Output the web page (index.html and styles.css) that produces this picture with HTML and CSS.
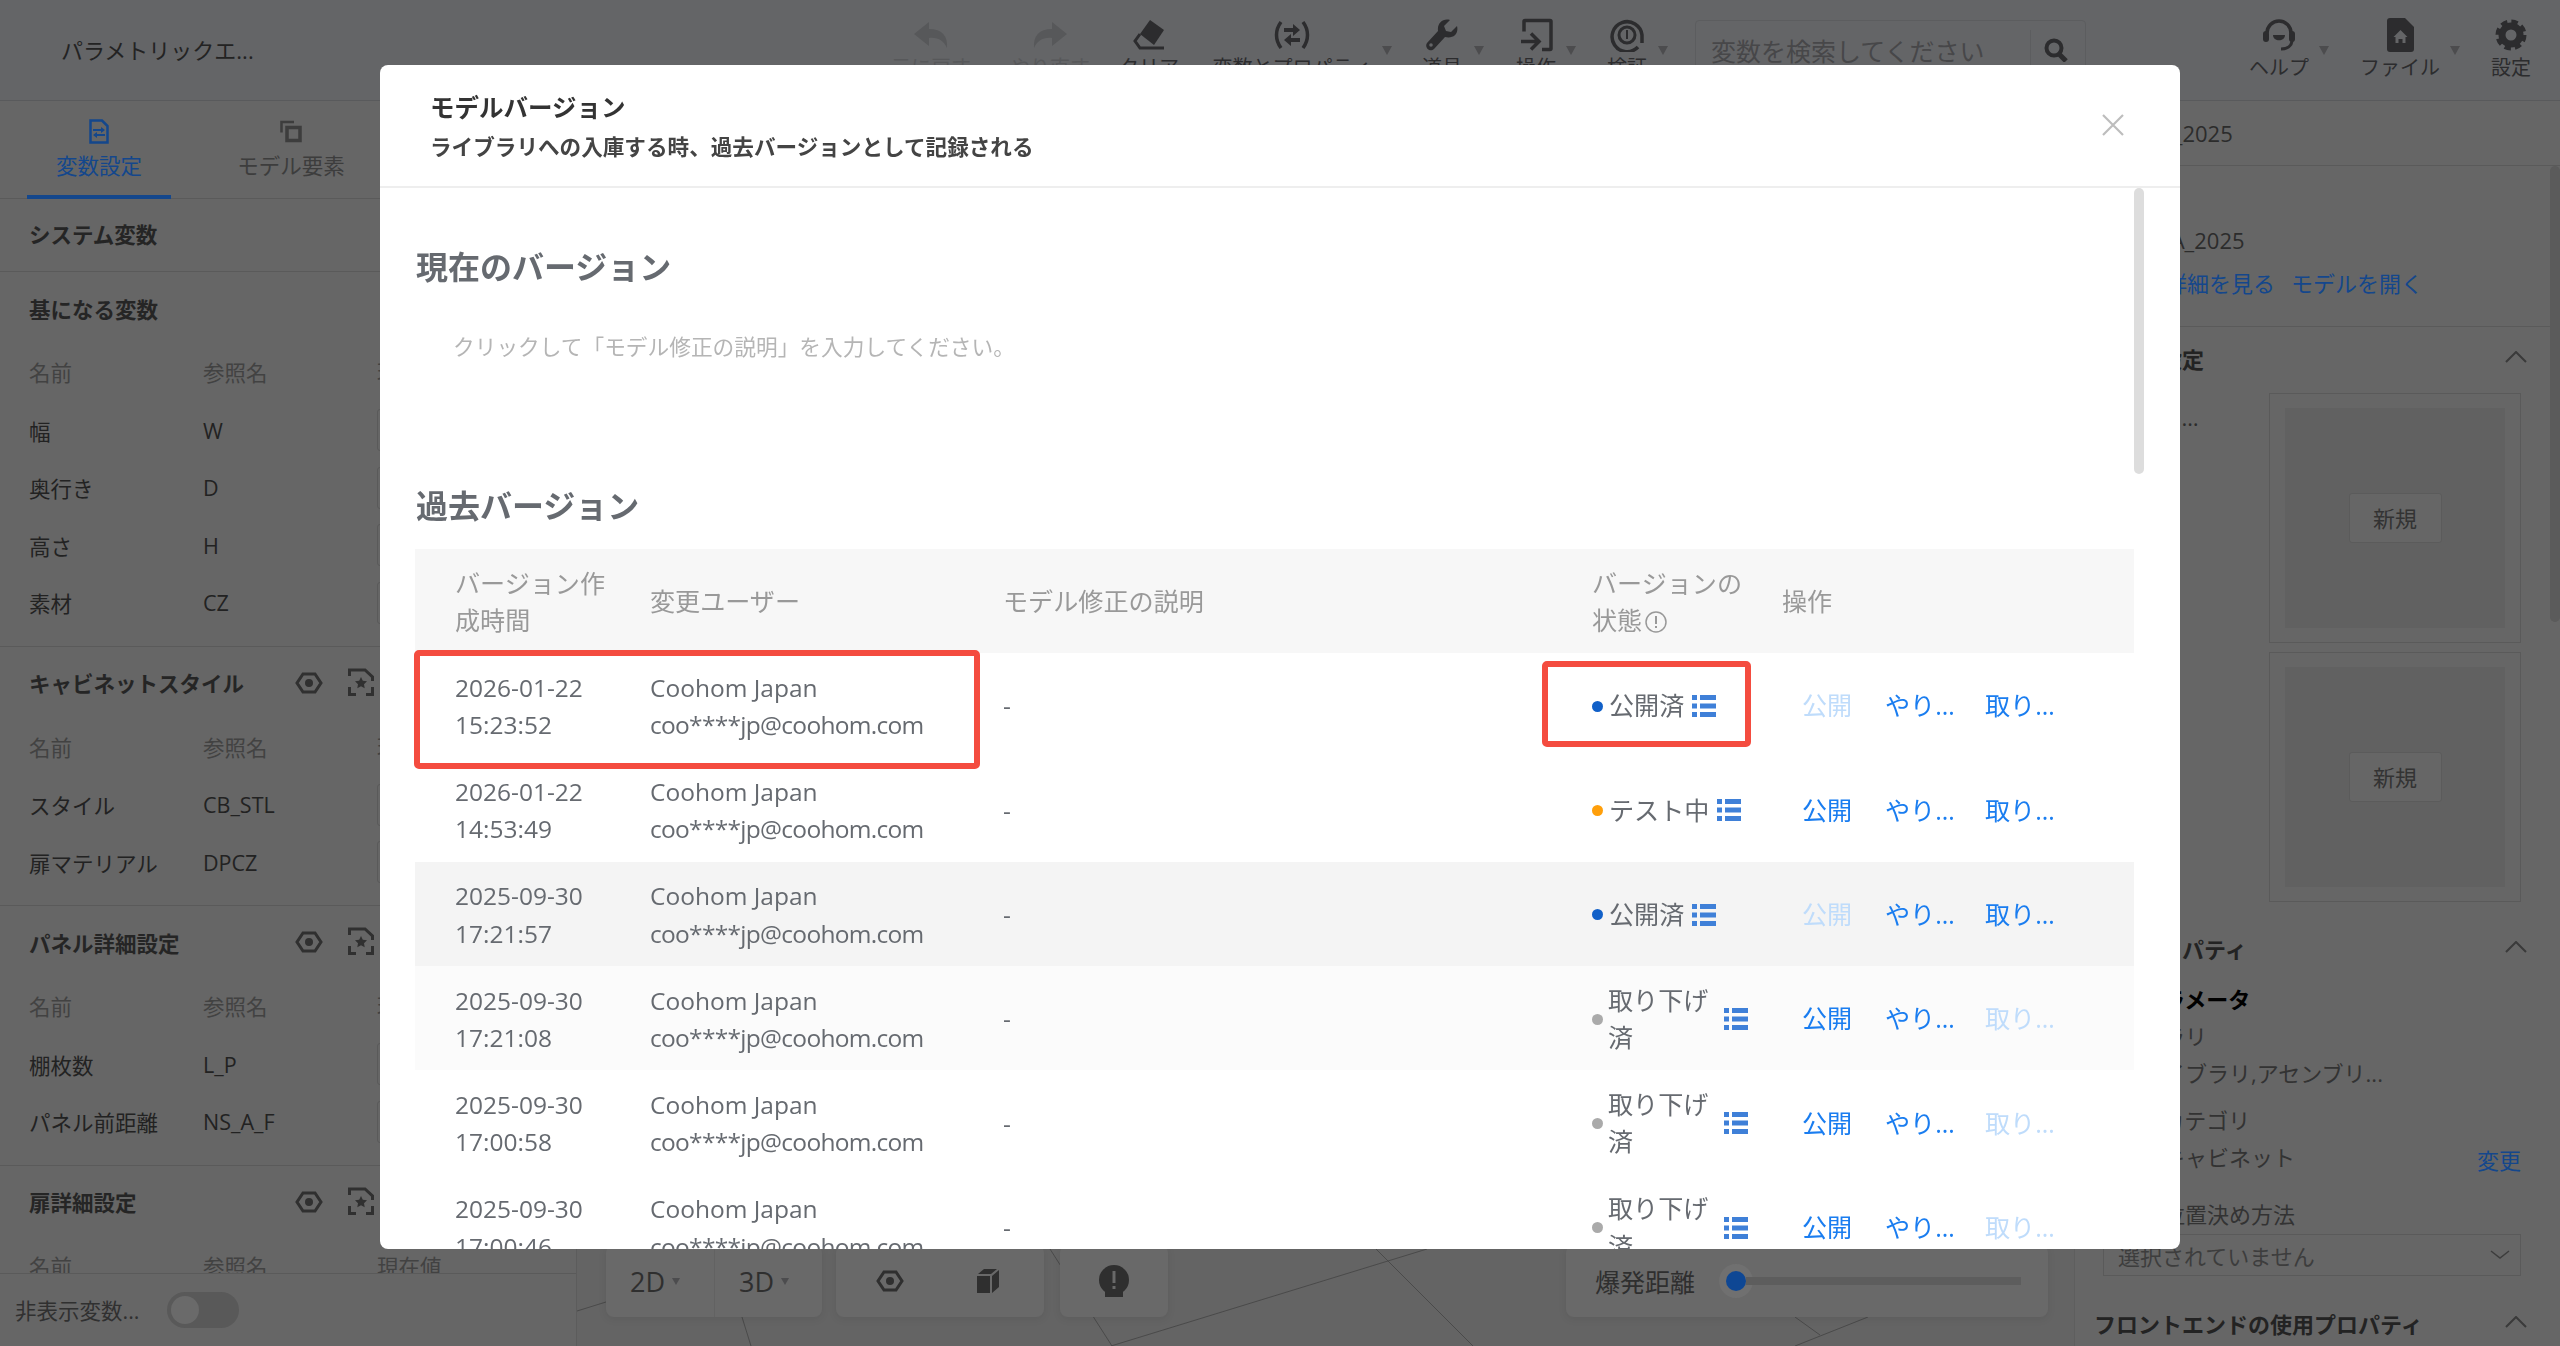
FILE: index.html

```html
<!DOCTYPE html>
<html lang="ja">
<head>
    <meta charset="UTF-8">
    <meta name="viewport" content="width=device-width, initial-scale=1.0">
    <title>モデルバージョン</title>
    <link rel="stylesheet" href="styles.css">
</head>
<body>
    <svg class="defs" width="0" height="0">
        <symbol id="i-list" viewBox="0 0 24 22">
            <path fill="currentColor" d="M0 0h5v5H0zM8 0h16v5H8zM0 8.500h5v5H0zM8 8.500h16v5H8zM0 17h5v5H0zM8 17h16v5H8z"/>
        </symbol>
        <symbol id="i-eye" viewBox="0 0 28 24">
            <path fill="none" stroke="currentColor" stroke-width="3" d="M8 3h12l6 9-6 9H8l-6-9z"/>
            <circle cx="14" cy="12" r="4" fill="currentColor"/>
        </symbol>
        <symbol id="i-star" viewBox="0 0 26 28">
            <path fill="none" stroke="currentColor" stroke-width="3" d="M1.500 8V2H17l7.500 7v4M24.500 19v7.500H18M8 26.500H1.500V19"/>
            <path fill="currentColor" d="M13 9l1.800 3.700 4.200.6-3 2.900.7 4.100-3.700-2-3.700 2 .7-4.100-3-2.900 4.200-.6z"/>
        </symbol>
        <symbol id="i-up" viewBox="0 0 22 12">
            <path fill="none" stroke="currentColor" stroke-width="2" d="M1 11 11 1l10 10"/>
        </symbol>
    </svg>

    <header class="topbar">
        <div class="app-title">パラメトリックエ...</div>
        <div class="tool tool-undo is-off">
            <svg width="34" height="26" viewBox="0 0 34 26"><path fill="currentColor" d="M15 0 0 12l15 12v-8c9-1 15 3 18 10 1-12-5-19-18-19z"/></svg>
            <span>元に戻す</span>
        </div>
        <div class="tool tool-redo is-off">
            <svg width="34" height="26" viewBox="0 0 34 26"><path fill="currentColor" d="M19 0l15 12-15 12v-8c-9-1-15 3-18 10C0 14 6 7 19 7z"/></svg>
            <span>やり直す</span>
        </div>
        <div class="tool tool-clear">
            <svg width="32" height="30" viewBox="0 0 32 30"><path fill="currentColor" d="M17 0l14 10-10 15L7 14z"/><path fill="none" stroke="currentColor" stroke-width="3" d="M7 14l-5 7 5 7h24"/></svg>
            <span>クリア</span>
        </div>
        <div class="tool tool-var">
            <svg width="36" height="28" viewBox="0 0 36 28"><path fill="none" stroke="currentColor" stroke-width="3.500" d="M7 1C1 9 1 19 7 27M29 1c6 8 6 18 0 26"/><path fill="currentColor" d="M10 7h9V3l7 6-7 6v-4h-9zM26 17h-9v-4l-7 6 7 6v-4h9z"/></svg>
            <span>変数とプロパティ</span>
            <i class="caret"></i>
        </div>
        <div class="tool tool-wrench">
            <svg width="32" height="32" viewBox="0 0 32 32"><path fill="currentColor" d="M31 7l-6 6-5-1-2-5 6-6C17-1 11 4 12 12L1 24c-3 4 3 10 7 6l11-12c8 2 14-3 12-11z"/><circle cx="5" cy="26" r="1.800" fill="#646567"/></svg>
            <span>道具</span>
            <i class="caret"></i>
        </div>
        <div class="tool tool-op">
            <svg width="33" height="33" viewBox="0 0 33 33"><path fill="none" stroke="currentColor" stroke-width="3.500" d="M4 13V3a1 1 0 0 1 1-1h25a1 1 0 0 1 1 1v27a1 1 0 0 1-1 1h-8"/><path fill="none" stroke="currentColor" stroke-width="3.500" d="M1 23h17M11 15l8 8-8 8"/></svg>
            <span>操作</span>
            <i class="caret"></i>
        </div>
        <div class="tool tool-check">
            <svg width="34" height="34" viewBox="0 0 34 34"><path fill="none" stroke="currentColor" stroke-width="3.500" d="M28 29A15 15 0 1 1 32 17v8"/><circle cx="17" cy="17" r="8" fill="none" stroke="currentColor" stroke-width="3"/><path fill="currentColor" d="M16 12h2v9h-2z"/></svg>
            <span>検証</span>
            <i class="caret"></i>
        </div>
        <div class="search">
            <span class="search-text">変数を検索してください</span>
            <span class="search-btn">
                <svg width="24" height="24" viewBox="0 0 24 24"><circle cx="10" cy="10" r="7.500" fill="none" stroke="currentColor" stroke-width="4"/><path stroke="currentColor" stroke-width="5" d="M15 16l7 7"/></svg>
            </span>
        </div>
        <div class="tool tool-help">
            <svg width="34" height="34" viewBox="0 0 34 34"><path fill="none" stroke="currentColor" stroke-width="3.500" d="M5 15a12 12 0 0 1 24 0"/><rect x="1" y="13" width="6" height="11" rx="3" fill="currentColor"/><rect x="27" y="13" width="6" height="11" rx="3" fill="currentColor"/><path fill="none" stroke="currentColor" stroke-width="3" d="M30 22c0 6-5 9-11 9"/><path fill="currentColor" d="M11 17h12c0 7-12 7-12 0z"/></svg>
            <span>ヘルプ</span>
            <i class="caret"></i>
        </div>
        <div class="tool tool-file">
            <svg width="27" height="34" viewBox="0 0 27 34"><path fill="currentColor" d="M3 0h15l9 9v22a3 3 0 0 1-3 3H3a3 3 0 0 1-3-3V3a3 3 0 0 1 3-3z"/><path fill="#646567" d="M13.500 12l7 7h-2v6h-3v-4h-4v4h-3v-6h-2z"/></svg>
            <span>ファイル</span>
            <i class="caret"></i>
        </div>
        <div class="tool tool-gear">
            <svg width="32" height="32" viewBox="0 0 32 32"><circle cx="16" cy="16" r="9" fill="none" stroke="currentColor" stroke-width="7"/><circle cx="16" cy="16" r="13.500" fill="none" stroke="currentColor" stroke-width="4" stroke-dasharray="6.500 4.100"/></svg>
            <span>設定</span>
        </div>
    </header>

    <main class="workspace">
        <aside class="left-panel">
            <nav class="tabs">
                <div class="tab is-active">
                    <svg width="20" height="25" viewBox="0 0 20 25"><path fill="none" stroke="currentColor" stroke-width="2.500" d="M1.500 1.500H13L18.500 7v16.500h-17z"/><path fill="currentColor" d="M4 10h8V8l4 3-4 3v-2H4zM16 15H8v-2l-4 3 4 3v-2h8z"/></svg>
                    <span>変数設定</span>
                </div>
                <div class="tab">
                    <svg width="22" height="22" viewBox="0 0 22 22"><path fill="none" stroke="currentColor" stroke-width="2.500" d="M1.500 12V1.500H14"/><path fill="none" stroke="currentColor" stroke-width="3.500" d="M7 7h13v13H7z"/></svg>
                    <span>モデル要素</span>
                </div>
            </nav>
            <div class="panel-scroll">
                <section class="var-group"><h3 class="group-head">システム変数</h3></section>
                <section class="var-group has-rows">
                    <h3 class="group-head">基になる変数</h3>
                    <div class="var-row var-labels"><span>名前</span><span>参照名</span><span>現在値</span></div>
                    <div class="var-row"><span>幅</span><span>W</span><b class="var-input"></b></div>
                    <div class="var-row"><span>奥行き</span><span>D</span><b class="var-input"></b></div>
                    <div class="var-row"><span>高さ</span><span>H</span><b class="var-input"></b></div>
                    <div class="var-row"><span>素材</span><span>CZ</span><b class="var-input"></b></div>
                </section>
                <section class="var-group has-rows">
                    <h3 class="group-head">キャビネットスタイル
                        <svg class="head-eye"><use href="#i-eye"/></svg><svg class="head-star"><use href="#i-star"/></svg>
                    </h3>
                    <div class="var-row var-labels"><span>名前</span><span>参照名</span><span>現在値</span></div>
                    <div class="var-row"><span>スタイル</span><span>CB_STL</span><b class="var-input"></b></div>
                    <div class="var-row"><span>扉マテリアル</span><span>DPCZ</span><b class="var-input"></b></div>
                </section>
                <section class="var-group has-rows">
                    <h3 class="group-head">パネル詳細設定
                        <svg class="head-eye"><use href="#i-eye"/></svg><svg class="head-star"><use href="#i-star"/></svg>
                    </h3>
                    <div class="var-row var-labels"><span>名前</span><span>参照名</span><span>現在値</span></div>
                    <div class="var-row"><span>棚枚数</span><span>L_P</span><b class="var-input"></b></div>
                    <div class="var-row"><span>パネル前距離</span><span>NS_A_F</span><b class="var-input"></b></div>
                </section>
                <section class="var-group has-rows">
                    <h3 class="group-head">扉詳細設定
                        <svg class="head-eye"><use href="#i-eye"/></svg><svg class="head-star"><use href="#i-star"/></svg>
                    </h3>
                    <div class="var-row var-labels"><span>名前</span><span>参照名</span><span>現在値</span></div>
                </section>
            </div>
            <div class="panel-foot">
                <span>非表示変数...</span>
                <span class="toggle"><i></i></span>
            </div>
        </aside>

        <div class="canvas">
            <svg class="scene" width="1497" height="1245" viewBox="577 101 1497 1245">
                <path fill="none" stroke="#4a4a4a" d="M1376 1249l97 97M1427 1249l-316 97M1050 1249l62 97M742 1317l9 29M577 1311l29-9M1795 1317l25 18M1868 1317l-73 29"/>
            </svg>
            <div class="float-bars">
                <div class="float-bar bar-view">
                    <span class="view-btn">2D<i class="caret"></i></span>
                    <span class="view-btn">3D<i class="caret"></i></span>
                </div>
                <div class="float-bar bar-icons">
                    <svg class="bar-eye"><use href="#i-eye"/></svg>
                    <svg width="22" height="24" viewBox="0 0 22 24"><path fill="currentColor" d="M0 7h13v17H0zM15 7l7-6v17l-7 6zM1 5l6-5h13l-6 5z"/></svg>
                </div>
                <div class="float-bar bar-warn">
                    <svg width="30" height="32" viewBox="0 0 30 32"><circle cx="15" cy="15" r="15" fill="currentColor"/><path fill="currentColor" d="M6 24h18v8H6z"/><path fill="#696969" d="M13.500 6h3v12h-3zM13.500 21h3v3h-3z"/></svg>
                </div>
                <div class="float-bar bar-range">
                    <span>爆発距離</span>
                    <span class="range"><i class="range-dot"></i><i class="range-track"></i></span>
                </div>
            </div>
        </div>

        <aside class="right-panel">
            <div class="rp-name">ベースA_2025</div>
            <div class="rp-scroll">
                <i class="rp-thumb"></i>
                <div class="rp-info">
                    <div class="rp-model">ベース.A_2025</div>
                    <div class="rp-links"><a>モデル詳細を見る</a><a>モデルを開く</a></div>
                </div>
                <div class="rp-section">
                    <h3 class="rp-head rp-head-first">外観の設定<svg class="rp-up"><use href="#i-up"/></svg></h3>
                    <div class="rp-styles">
                        <span class="rp-style-label">サムネイルの</span>
                        <div class="rp-boxes">
                            <div class="rp-box"><div class="rp-box-in"><span class="rp-new">新規</span></div></div>
                            <div class="rp-box"><div class="rp-box-in"><span class="rp-new">新規</span></div></div>
                        </div>
                    </div>
                </div>
                <div class="rp-section rp-props">
                    <h3 class="rp-head">基本プロパティ<svg class="rp-up"><use href="#i-up"/></svg></h3>
                    <div class="rp-sub">基本パラメータ</div>
                    <div class="rp-line">ライブラリ</div>
                    <div class="rp-line">個人ライブラリ,アセンブリ...</div>
                    <div class="rp-line rp-gap">モデルカテゴリ</div>
                    <div class="rp-line rp-change">家具・キャビネット<a>変更</a></div>
                    <div class="rp-line rp-gap-lg">自動の位置決め方法</div>
                    <div class="rp-select">選択されていません<svg width="20" height="10" viewBox="0 0 20 10"><path fill="none" stroke="currentColor" stroke-width="1.500" d="M1 1l9 7 9-7"/></svg></div>
                    <h3 class="rp-head rp-head-last">フロントエンドの使用プロパティ<svg class="rp-up"><use href="#i-up"/></svg></h3>
                </div>
            </div>
        </aside>
    </main>

    <div class="mask">
        <div class="modal">
            <div class="modal-head">
                <div class="modal-title">モデルバージョン</div>
                <div class="modal-sub">ライブラリへの入庫する時、過去バージョンとして記録される</div>
                <svg class="modal-close" width="22" height="22" viewBox="0 0 22 22"><path fill="none" stroke="currentColor" stroke-width="2.200" d="M1 1l20 20M21 1L1 21"/></svg>
            </div>
            <div class="modal-body">
                <i class="modal-thumb"></i>
                <h2 class="section-title">現在のバージョン</h2>
                <p class="desc-hint">クリックして「モデル修正の説明」を入力してください。</p>
                <h2 class="section-title section-past">過去バージョン</h2>
                <table class="ver-table">
                    <colgroup><col class="c-time"><col class="c-user"><col class="c-desc"><col class="c-state"><col class="c-ops"></colgroup>
                    <thead>
                        <tr>
                            <th>バージョン作成時間</th>
                            <th>変更ユーザー</th>
                            <th>モデル修正の説明</th>
                            <th>バージョンの状態<svg class="th-info" width="22" height="22" viewBox="0 0 22 22"><circle cx="11" cy="11" r="10" fill="none" stroke="currentColor" stroke-width="1.500"/><path fill="currentColor" d="M10 5h2v8h-2zM10 15h2v2h-2z"/></svg></th>
                            <th>操作</th>
                        </tr>
                    </thead>
                    <tbody>
                        <tr>
                            <td>2026-01-22<br>15:23:52</td>
                            <td>Coohom Japan<br><span class="mail">coo****jp@coohom.com</span></td>
                            <td>-</td>
                            <td><div class="state"><i class="dot dot-pub"></i><span class="state-text">公開済</span><svg class="state-list"><use href="#i-list"/></svg></div></td>
                            <td><div class="ops"><a class="op op-short is-off">公開</a><a class="op">やり直す</a><a class="op">取り下げ</a></div></td>
                        </tr>
                        <tr>
                            <td>2026-01-22<br>14:53:49</td>
                            <td>Coohom Japan<br><span class="mail">coo****jp@coohom.com</span></td>
                            <td>-</td>
                            <td><div class="state"><i class="dot dot-test"></i><span class="state-text">テスト中</span><svg class="state-list"><use href="#i-list"/></svg></div></td>
                            <td><div class="ops"><a class="op op-short">公開</a><a class="op">やり直す</a><a class="op">取り下げ</a></div></td>
                        </tr>
                        <tr class="is-striped">
                            <td>2025-09-30<br>17:21:57</td>
                            <td>Coohom Japan<br><span class="mail">coo****jp@coohom.com</span></td>
                            <td>-</td>
                            <td><div class="state"><i class="dot dot-pub"></i><span class="state-text">公開済</span><svg class="state-list"><use href="#i-list"/></svg></div></td>
                            <td><div class="ops"><a class="op op-short is-off">公開</a><a class="op">やり直す</a><a class="op">取り下げ</a></div></td>
                        </tr>
                        <tr class="is-hover">
                            <td>2025-09-30<br>17:21:08</td>
                            <td>Coohom Japan<br><span class="mail">coo****jp@coohom.com</span></td>
                            <td>-</td>
                            <td><div class="state"><i class="dot dot-off"></i><span class="state-text state-wrap">取り下げ済</span><svg class="state-list"><use href="#i-list"/></svg></div></td>
                            <td><div class="ops"><a class="op op-short">公開</a><a class="op">やり直す</a><a class="op is-off">取り下げ</a></div></td>
                        </tr>
                        <tr>
                            <td>2025-09-30<br>17:00:58</td>
                            <td>Coohom Japan<br><span class="mail">coo****jp@coohom.com</span></td>
                            <td>-</td>
                            <td><div class="state"><i class="dot dot-off"></i><span class="state-text state-wrap">取り下げ済</span><svg class="state-list"><use href="#i-list"/></svg></div></td>
                            <td><div class="ops"><a class="op op-short">公開</a><a class="op">やり直す</a><a class="op is-off">取り下げ</a></div></td>
                        </tr>
                        <tr>
                            <td>2025-09-30<br>17:00:46</td>
                            <td>Coohom Japan<br><span class="mail">coo****jp@coohom.com</span></td>
                            <td>-</td>
                            <td><div class="state"><i class="dot dot-off"></i><span class="state-text state-wrap">取り下げ済</span><svg class="state-list"><use href="#i-list"/></svg></div></td>
                            <td><div class="ops"><a class="op op-short">公開</a><a class="op">やり直す</a><a class="op is-off">取り下げ</a></div></td>
                        </tr>
                    </tbody>
                </table>
                <i class="mark mark-row"></i>
                <i class="mark mark-state"></i>
            </div>
        </div>
    </div>
</body>
</html>
```

FILE: styles.css

```css
* {
    box-sizing: border-box;
}
html, body {
    margin: 0;
    height: 100%;
}
body {
    display: flex;
    flex-direction: column;
    width: 2560px;
    height: 1346px;
    overflow: hidden;
    font-family: "Open Sans", "Noto Sans CJK JP", sans-serif;
    font-size: 21.5px;
    color: #222;
    background: #666;
}
.defs {
    position: absolute;
}
i {
    font-style: normal;
}

/* top bar */
.topbar {
    display: flex;
    flex: none;
    height: 101px;
    background: #646567;
    border-bottom: 1px solid #595a5c;
}
.app-title {
    width: 871px;
    padding: 34px 0 0 61px;
    font-size: 22px;
    line-height: 32px;
    color: #232323;
}
.tool {
    position: relative;
    display: flex;
    flex: none;
    flex-direction: column;
    align-items: center;
    height: 100px;
    padding-top: 18px;
    color: #2c2c2e;
    font-size: 20px;
}
.tool svg {
    height: 34px;
    flex: none;
}
.tool span {
    margin-top: 3px;
    line-height: 26px;
    white-space: nowrap;
}
.tool.is-off {
    color: #57585a;
}
.tool-undo { width: 120px; }
.tool-redo { width: 118px; }
.tool-clear { width: 80px; }
.tool-var { width: 206px; }
.tool-wrench { width: 94px; }
.tool-op { width: 94px; }
.tool-check { width: 88px; margin-right: 24px; }
.tool-help { width: 118px; }
.tool-file { width: 124px; }
.tool-gear { width: 98px; }
.caret {
    display: inline-block;
    width: 0;
    height: 0;
    border-left: 5px solid transparent;
    border-right: 5px solid transparent;
    border-top: 9px solid #4c4c4e;
}
.tool .caret {
    position: absolute;
    top: 46px;
    right: 3px;
}
.tool-wrench .caret { right: 5px; }
.tool-op .caret { right: 7px; }
.tool-check .caret { right: 3px; }
.tool-help .caret { right: 9px; }
.tool-file .caret { right: 2px; }
.search {
    display: flex;
    flex: none;
    align-items: center;
    width: 391px;
    height: 60px;
    margin: 20px 134px 0 0;
    padding-left: 15px;
    border: 1px solid #5c5d5f;
    border-radius: 4px;
    font-size: 25px;
    color: #474749;
}
.search-text {
    flex: 1;
}
.search-btn {
    display: flex;
    align-items: center;
    justify-content: center;
    width: 55px;
    height: 40px;
    padding-right: 5px;
    border-left: 1px solid #5c5d5f;
    color: #2c2c2e;
}

/* workspace */
.workspace {
    display: flex;
    flex: 1;
    min-height: 0;
}
.left-panel {
    display: flex;
    flex: none;
    flex-direction: column;
    width: 577px;
    border-right: 1px solid #5c5c5c;
    background: #666;
}
.tabs {
    display: flex;
    flex: none;
    height: 98px;
    padding-left: 27px;
    border-bottom: 1px solid #5a5a5a;
}
.tab {
    display: flex;
    flex-direction: column;
    align-items: center;
    width: 144px;
    margin-right: 48px;
    padding-top: 18px;
    color: #3d3d3d;
    line-height: 30px;
}
.tab svg {
    height: 25px;
    margin-bottom: 7px;
}
.tab.is-active {
    color: #14478c;
    border-bottom: 4px solid #14478c;
    height: 98px;
}
.panel-scroll {
    flex: 1;
    min-height: 0;
    overflow: hidden;
}
.var-group {
    border-bottom: 1px solid #5a5a5a;
}
.var-group.has-rows {
    padding: 1px 0 15px;
}
.group-head {
    position: relative;
    height: 70px;
    margin: 0;
    padding: 3.500px 0 0 29px;
    font-size: 21.5px;
    font-weight: 700;
    line-height: 66.500px;
    color: #252525;
}
.var-group:first-child .group-head {
    height: 72px;
    padding-top: 0;
    line-height: 72px;
}
.head-eye, .head-star {
    position: absolute;
    top: 23px;
    color: #303030;
}
.head-eye {
    left: 295px;
    width: 28px;
    height: 24px;
}
.head-star {
    left: 348px;
    width: 26px;
    height: 28px;
    top: 20px;
}
.var-row {
    display: grid;
    grid-template-columns: 174px 174px 1fr;
    align-items: center;
    height: 57.500px;
    padding: 1.500px 0 0 29px;
}
.var-labels {
    color: #424242;
    padding-top: 0;
}
.var-input {
    display: block;
    height: 42px;
    border: 1px solid #5a5a5a;
    border-radius: 3px;
}
.panel-foot {
    display: flex;
    flex: none;
    align-items: center;
    height: 73px;
    padding: 0 0 2px 15px;
    border-top: 1px solid #5a5a5a;
    background: #666;
    color: #303030;
}
.toggle {
    display: flex;
    align-items: center;
    width: 72px;
    height: 36px;
    margin: 2px 0 0 28px;
    padding-left: 4px;
    border-radius: 18px;
    background: #595959;
}
.toggle i {
    width: 28px;
    height: 28px;
    border-radius: 50%;
    background: #6a6a6a;
}

/* canvas */
.canvas {
    position: relative;
    flex: 1;
    overflow: hidden;
    background: #646464;
}
.scene {
    position: absolute;
    left: 0;
    top: 0;
}
.float-bars {
    position: absolute;
    left: 29px;
    bottom: 29px;
    display: flex;
    align-items: stretch;
    gap: 14px;
}
.float-bar {
    display: flex;
    align-items: center;
    height: 72px;
    border-radius: 8px;
    background: #696969;
    box-shadow: 0 2px 8px rgba(0, 0, 0, 0.08);
    color: #2f2f2f;
}
.bar-view {
    width: 216px;
}
.view-btn {
    display: flex;
    align-items: center;
    gap: 7px;
    width: 108px;
    height: 100%;
    padding-left: 24px;
    font-size: 27px;
}
.view-btn + .view-btn {
    padding-left: 24px;
    border-left: 1px solid #626262;
}
.view-btn .caret {
    border-left-width: 4px;
    border-right-width: 4px;
    border-top-width: 7px;
}
.bar-icons {
    gap: 73px;
    justify-content: center;
    width: 208px;
    padding-right: 5px;
}
.bar-eye {
    width: 28px;
    height: 24px;
}
.bar-warn {
    justify-content: center;
    width: 108px;
    margin-left: 2px;
}
.bar-range {
    width: 482px;
    margin-left: 384px;
    padding-left: 29px;
    font-size: 25px;
    color: #2f2f2f;
}
.range {
    display: flex;
    align-items: center;
    margin-left: 31px;
}
.range-dot {
    width: 20px;
    height: 20px;
    border-radius: 50%;
    background: #0e4794;
    box-shadow: 0 0 0 7px #707070;
}
.range-track {
    width: 275px;
    height: 8px;
    background: #5d5d5d;
}

/* right panel */
.right-panel {
    display: flex;
    flex-direction: column;
    flex: none;
    width: 486px;
    border-left: 1px solid #5e5e5e;
    background: #666;
    font-size: 22px;
}
.rp-name {
    flex: none;
    height: 65px;
    padding-left: 19px;
    border-bottom: 1px solid #5a5a5a;
    line-height: 64px;
    color: #2c2c2c;
    white-space: nowrap;
}
.rp-scroll {
    position: relative;
    flex: 1;
    min-height: 0;
    overflow: hidden;
    padding-left: 19px;
}
.rp-thumb {
    position: absolute;
    right: 0;
    top: 0;
    width: 10px;
    height: 456px;
    border-radius: 5px;
    background: #5b5b5b;
}
.rp-info {
    height: 161px;
    margin-left: -19px;
    padding: 53px 0 0 19px;
    border-bottom: 1px solid #5a5a5a;
    line-height: 43px;
    color: #2c2c2c;
}
.rp-model {
    padding-left: 6px;
}
.rp-links {
    padding-left: 5px;
}
.rp-links a {
    margin-right: 16px;
    color: #14478c;
}
.rp-section {
    padding-right: 39px;
}
.rp-head {
    position: relative;
    height: 64px;
    margin: 0;
    font-size: 22px;
    font-weight: 700;
    line-height: 64px;
    color: #232323;
}
.rp-head-first {
    height: 66px;
}
.rp-up {
    position: absolute;
    right: -6px;
    top: 24px;
    width: 22px;
    height: 12px;
    color: #3a3a3a;
}
.rp-styles {
    display: flex;
    justify-content: space-between;
}
.rp-style-label {
    width: 108px;
    overflow: hidden;
    margin-top: 6px;
    line-height: 36px;
    text-overflow: ellipsis;
    white-space: nowrap;
    color: #2c2c2c;
}
.rp-boxes {
    display: flex;
    flex-direction: column;
    gap: 9px;
    width: 252px;
}
.rp-box {
    height: 250px;
    padding: 14px 15px;
    border: 1px solid #5a5a5a;
}
.rp-box-in {
    display: flex;
    align-items: center;
    justify-content: center;
    height: 100%;
    background: #616161;
}
.rp-new {
    width: 93px;
    height: 50px;
    border: 1px solid #5b5b5b;
    border-radius: 3px;
    background: #666;
    color: #333;
    line-height: 48px;
    text-align: center;
}
.rp-props {
    margin-top: 15px;
}
.rp-sub {
    padding-left: 3px;
    line-height: 37px;
    font-weight: 700;
    color: #000;
}
.rp-line {
    padding-left: 3px;
    line-height: 37px;
    color: #333;
    white-space: nowrap;
}
.rp-gap {
    margin-top: 10px;
}
.rp-gap-lg {
    margin-top: 17px;
}
.rp-change {
    display: flex;
    justify-content: space-between;
}
.rp-change a {
    margin-top: 3px;
    color: #14478c;
}
.rp-select {
    display: flex;
    align-items: center;
    justify-content: space-between;
    width: 418px;
    height: 42px;
    margin: 1px 0 0 9px;
    padding: 0 10px 0 14px;
    border: 1px solid #5a5a5a;
    color: #3d3d3d;
}
.rp-head-last {
    margin-top: 16px;
}

/* modal */
.mask {
    position: fixed;
    inset: 0;
}
.modal {
    position: absolute;
    left: 380px;
    top: 65px;
    display: flex;
    flex-direction: column;
    width: 1800px;
    height: 1184px;
    overflow: hidden;
    border-radius: 8px;
    background: #fff;
}
.modal-head {
    position: relative;
    flex: none;
    height: 123px;
    padding: 25px 0 0 50px;
    border-bottom: 2px solid #eee;
}
.modal-title {
    font-size: 24.500px;
    font-weight: 700;
    line-height: 36px;
    color: #333;
}
.modal-sub {
    margin-top: 3px;
    font-size: 21.600px;
    font-weight: 700;
    line-height: 36px;
    color: #444;
}
.modal-close {
    position: absolute;
    right: 56px;
    top: 49px;
    color: #bdbdbd;
}
.modal-body {
    position: relative;
    flex: 1;
    min-height: 0;
    overflow: hidden;
    padding: 0 46px 0 35px;
}
.modal-thumb {
    position: absolute;
    left: 1754px;
    top: 0;
    width: 10px;
    height: 286px;
    border-radius: 5px;
    background: #ddd;
}
.section-title {
    margin: 0 0 0 1px;
    padding-top: 54px;
    font-size: 32px;
    font-weight: 700;
    line-height: 50px;
    color: #666a70;
}
.desc-hint {
    margin: 37px 0 0 38px;
    font-size: 21.700px;
    line-height: 36px;
    color: #b5b5b5;
}
.section-past {
    padding-top: 116px;
}
.ver-table {
    width: 1719px;
    margin-top: 18px;
    border-collapse: collapse;
    table-layout: fixed;
    font-size: 24.500px;
    line-height: 37.500px;
    color: #666a70;
}
.c-time { width: 195px; }
.c-user { width: 353px; }
.c-desc { width: 589px; }
.c-state { width: 191px; }
.c-ops { width: 391px; }
.ver-table th {
    height: 104px;
    padding: 2px 0 0 40px;
    background: #f7f7f7;
    font-size: 25.100px;
    font-weight: 400;
    color: #999;
    text-align: left;
}
.ver-table td {
    height: 104.330px;
    padding: 2px 0 0 40px;
    vertical-align: middle;
}
.ver-table th:last-child,
.ver-table td:last-child {
    padding-left: 39px;
}
.mail {
    letter-spacing: -0.7px;
}
.is-striped td {
    background: #f4f4f4;
}
.is-hover td {
    background: #fbfbfb;
}
.th-info {
    margin-left: 3px;
    vertical-align: -3px;
    color: #999;
}
.state {
    display: flex;
    align-items: center;
}
.dot {
    flex: none;
    width: 11px;
    height: 11px;
    margin-right: 6px;
    border-radius: 50%;
}
.dot-pub { background: #1160c8; }
.dot-test { background: #ff9f0a; }
.dot-off { background: #aaa; margin-right: 5px; }
.state-text {
    flex: none;
    font-size: 25.100px;
}
.state-wrap {
    width: 102px;
}
.state-list {
    flex: none;
    width: 24px;
    height: 22px;
    margin-left: 8px;
    color: #3f80d8;
}
.state-wrap + .state-list {
    margin-left: 14px;
}
.ops {
    display: flex;
    align-items: center;
    gap: 30px;
    padding-left: 20px;
    font-size: 25.100px;
}
.op {
    width: 70px;
    overflow: hidden;
    color: #1a7df0;
    text-overflow: ellipsis;
    white-space: nowrap;
}
.op-short {
    width: 53px;
}
.op.is-off {
    color: #bfdcfb;
}
.mark {
    position: absolute;
    border: 6px solid #f44c3f;
    border-radius: 5px;
}
.mark-row {
    left: 34px;
    top: 462px;
    width: 566px;
    height: 119px;
}
.mark-state {
    left: 1162px;
    top: 473px;
    width: 209px;
    height: 86px;
}
```
